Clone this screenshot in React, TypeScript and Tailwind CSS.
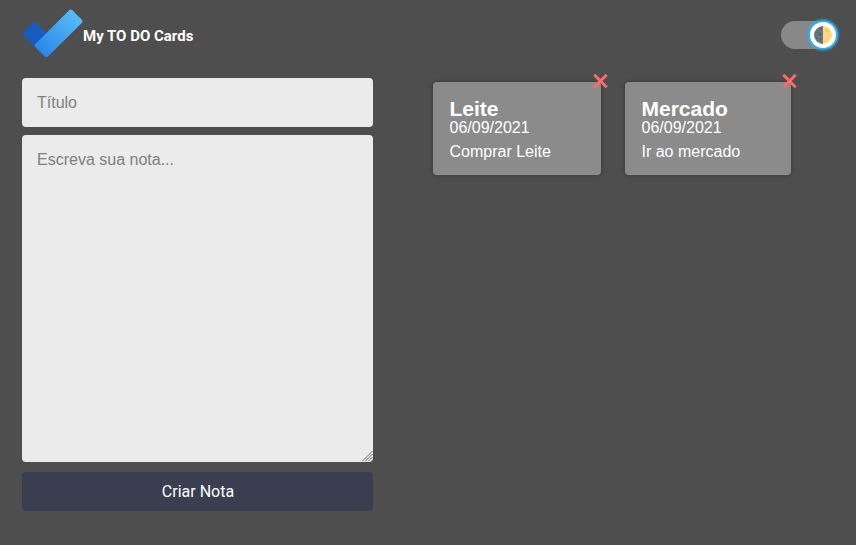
const notes = [
  { title: "Leite", date: "06/09/2021", text: "Comprar Leite", width: "w-[168px]", close: "-right-[7px]" },
  { title: "Mercado", date: "06/09/2021", text: "Ir ao mercado", width: "w-[166px]", close: "-right-[6px]" },
];

function Logo() {
  return (
    <svg className="h-[50px] w-[61px]" viewBox="0 0 61 50" fill="none">
      <defs>
        <linearGradient id="tick" x1="18" y1="43" x2="55" y2="6" gradientUnits="userSpaceOnUse">
          <stop stopColor="#2a87e8" />
          <stop offset="1" stopColor="#55bcf6" />
        </linearGradient>
      </defs>
      <path d="M1.7 22.7 10.6 13.8Q12.2 12.4 13.8 13.8L27 26.5 14 39 1.7 26.5Q0 24.6 1.7 22.7Z" fill="#185abd" />
      <path d="M47.2 1.2Q48.8-.2 50.4 1.2L59.8 10.8Q61.2 12.4 59.8 14L25.9 47.6Q24.3 49.2 22.7 47.6L13.1 38Q11.9 36.6 13.1 35.2Z" fill="url(#tick)" />
    </svg>
  );
}

function HalfMoon() {
  return (
    <svg className="size-[18px]" viewBox="0 0 18 18">
      <path d="M9 0a9 9 0 0 0 0 18Z" fill="#66757f" />
      <path d="M9 0a9 9 0 0 1 0 18Z" fill="#ffd983" />
      <g fill="#546370">
        <circle cx="5.8" cy="8.2" r="1.7" />
        <circle cx="6.8" cy="3" r="1.1" />
        <circle cx="3" cy="12" r="1" />
        <circle cx="6.6" cy="13.3" r="1" />
        <circle cx="2.4" cy="6.2" r=".7" />
      </g>
      <g fill="#ffcc4d">
        <circle cx="13" cy="4.6" r="2" />
        <circle cx="13.2" cy="12" r="1.1" />
        <circle cx="16" cy="9" r=".8" />
        <circle cx="10.8" cy="15" r="1" />
      </g>
    </svg>
  );
}

export default function App() {
  return (
    <div className="h-[545px] overflow-hidden bg-[#4e4e4e] font-['Liberation_Sans',Arial,sans-serif] text-base text-white">
      <header className="flex h-[70px] items-center justify-between pr-[18px] pl-[22px]">
        <div className="flex items-center">
          <div className="-mt-0.5"><Logo /></div>
          <h1 className="mt-0.5 font-['Roboto',sans-serif] text-[15px] leading-none font-bold whitespace-nowrap">
            My TO DO Cards
          </h1>
        </div>
        <button aria-label="Alternar tema" className="flex h-7 w-[57px] items-center justify-end rounded-full bg-[#888]">
          <span className="mr-0.5 flex size-[26px] shrink-0 items-center justify-center rounded-full bg-white shadow-[0_0_3px_2px_#2fb0f8,0_0_3px_1px_#2fb0f8]">
            <HalfMoon />
          </span>
        </button>
      </header>
      <main className="flex pt-2 pl-[22px]">
        <form className="flex w-[351px] flex-col">
          <input
            placeholder="Título"
            className="h-[49px] rounded-[4px] bg-[#ebebeb] px-[15px] text-[#333] outline-none placeholder:text-[#808080]"
          />
          <div className="relative mt-2 h-[327px]">
            <textarea
              placeholder="Escreva sua nota..."
              className="block size-full resize-none rounded-[4px] bg-[#ebebeb] px-[15px] pt-4 leading-[18px] text-[#333] outline-none placeholder:text-[#808080]"
            />
            <svg className="absolute right-0 bottom-0 size-[11px]" viewBox="0 0 11 11" stroke="#777" strokeWidth="1">
              <path d="M0 10.5 10.5 0M3 10.5 10.5 3M6 10.5 10.5 6M9 10.5 10.5 9" />
            </svg>
          </div>
          <button type="button" className="mt-2.5 h-[39px] rounded-[4px] bg-[#393e50] pl-px font-['Roboto',sans-serif]">
            Criar Nota
          </button>
        </form>
        <section className="ml-[60px] flex items-start gap-6 pt-1">
          {notes.map((note) => (
            <article
              key={note.title}
              className={`relative h-[93px] rounded-[4px] bg-[#8b8b8b] pt-4 pl-[16.5px] shadow-[0_0_4px_1px_#00000033] ${note.width}`}
            >
              <button aria-label="Excluir" className={`absolute -top-2 ${note.close}`}>
                <svg className="h-3.5 w-[15px]" viewBox="0 0 15 14" stroke="#ff6b6b" strokeWidth="2.9">
                  <path d="m1.3.8 12.4 12.4M13.7.8 1.3 13.2" />
                </svg>
              </button>
              <h2 className="text-[21px] leading-[21px] font-bold">{note.title}</h2>
              <p className="leading-[18px]">{note.date}</p>
              <p className="mt-1.5 leading-[18px]">{note.text}</p>
            </article>
          ))}
        </section>
      </main>
    </div>
  );
}
